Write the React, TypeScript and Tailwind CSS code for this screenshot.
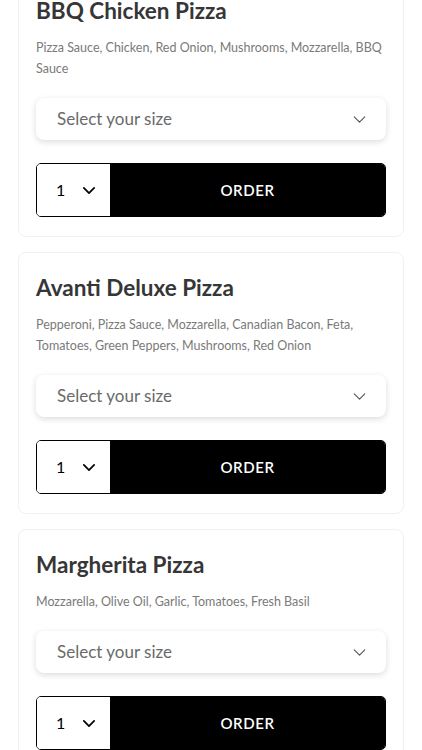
const pizzas = [
  {
    name: "BBQ Chicken Pizza",
    toppings: "Pizza Sauce, Chicken, Red Onion, Mushrooms, Mozzarella, BBQ Sauce",
  },
  {
    name: "Avanti Deluxe Pizza",
    toppings:
      "Pepperoni, Pizza Sauce, Mozzarella, Canadian Bacon, Feta, Tomatoes, Green Peppers, Mushrooms, Red Onion",
  },
  {
    name: "Margherita Pizza",
    toppings: "Mozzarella, Olive Oil, Garlic, Tomatoes, Fresh Basil",
  },
];

function Chevron({ className, stroke }: { className?: string; stroke: number }) {
  return (
    <svg viewBox="0 0 14 8" className={className} fill="none">
      <path
        d="M1 1l6 6 6-6"
        stroke="currentColor"
        strokeWidth={stroke}
        strokeLinecap="round"
        strokeLinejoin="round"
      />
    </svg>
  );
}

function PizzaCard({ name, toppings }: { name: string; toppings: string }) {
  return (
    <div className="rounded-lg border border-[#f1f1f1] bg-white px-[17px] pt-[21px] pb-[19px]">
      <h2 className="text-[22.5px] leading-[28px] font-bold text-[#363636]">{name}</h2>
      <p className="mt-3 text-[12.5px] leading-[21px] text-[#7a7a7a]">{toppings}</p>

      <button
        type="button"
        className="mt-[19px] flex h-[42px] w-full items-center justify-between rounded-lg bg-white pl-[21px] pr-5 shadow-[0_2px_6px_rgba(0,0,0,0.14)]"
      >
        <span className="text-[17px] text-[#6a6a6a]">Select your size</span>
        <Chevron className="h-[7px] w-[13px] text-[#555]" stroke={1.3} />
      </button>

      <div className="mt-[23px] flex h-[54px] overflow-hidden rounded-[5px] border border-black">
        <div className="flex w-[73px] items-center gap-[18px] bg-white pl-[19px]">
          <span className="text-[16px] text-black">1</span>
          <Chevron className="h-[7px] w-[12px] text-black" stroke={2} />
        </div>
        <button
          type="button"
          className="flex flex-1 items-center justify-center bg-black text-[15px] font-semibold tracking-[0.04em] text-white"
        >
          ORDER
        </button>
      </div>
    </div>
  );
}

export default function App() {
  return (
    <div
      className="min-h-[750px] overflow-hidden bg-white"
      style={{ fontFamily: "Lato, 'Open Sans', sans-serif" }}
    >
      <div className="-mt-[25px] flex flex-col gap-[15px] px-[18px]">
        {pizzas.map((p) => (
          <PizzaCard key={p.name} name={p.name} toppings={p.toppings} />
        ))}
      </div>
    </div>
  );
}
